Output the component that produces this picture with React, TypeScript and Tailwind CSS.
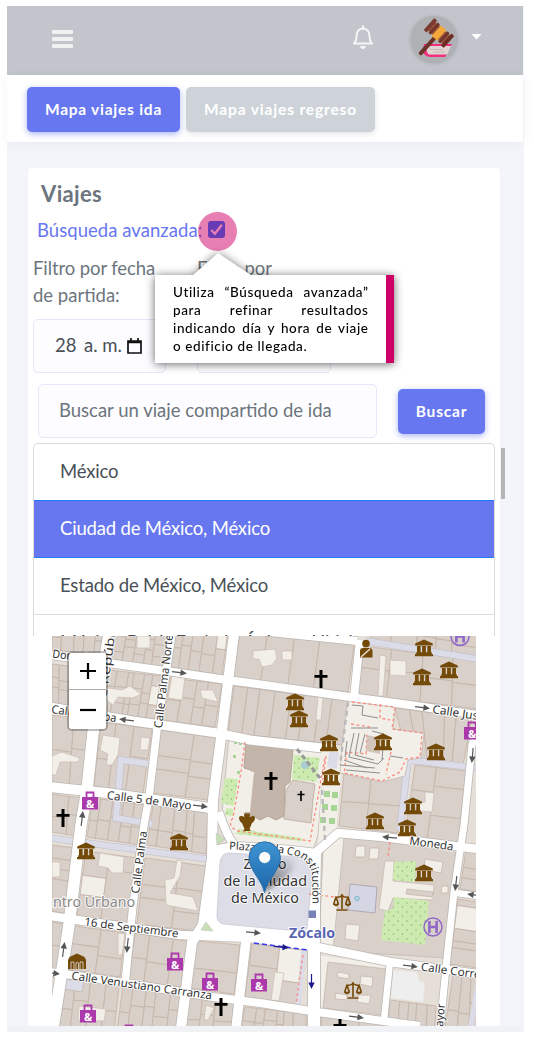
import React from "react";

type Pt = [number, number];
type Quad = [Pt, Pt, Pt, Pt];

const blocks: { q: Quad; c: number; r: number }[] = [
  { q: [[52, 600], [107, 605], [102, 655], [52, 650]], c: 5, r: 3 },
  { q: [[116, 625], [168, 630], [163, 668], [110, 661]], c: 5, r: 3 },
  { q: [[176, 625], [228, 630], [222, 675], [170, 667]], c: 5, r: 2 },
  { q: [[240, 632], [354, 645], [348, 692], [233, 678]], c: 4, r: 1 },
  { q: [[52, 664], [100, 670], [94, 710], [52, 703]], c: 5, r: 3 },
  { q: [[109, 670], [162, 676], [155, 719], [102, 712]], c: 6, r: 3 },
  { q: [[170, 678], [222, 684], [215, 727], [163, 720]], c: 4, r: 2 },
  { q: [[234, 686], [349, 701], [343, 745], [228, 733]], c: 8, r: 1 },
  { q: [[52, 715], [90, 719], [82, 787], [52, 782]], c: 2, r: 2 },
  { q: [[101, 722], [152, 729], [143, 793], [94, 786]], c: 3, r: 2 },
  { q: [[161, 730], [217, 738], [208, 800], [152, 793]], c: 2, r: 3 },
  { q: [[52, 794], [82, 798], [77, 836], [52, 832]], c: 2, r: 2 },
  { q: [[93, 798], [144, 805], [139, 845], [87, 837]], c: 5, r: 2 },
  { q: [[153, 805], [208, 813], [206, 854], [147, 845]], c: 5, r: 2 },
  { q: [[52, 845], [76, 848], [68, 914], [52, 911]], c: 1, r: 5 },
  { q: [[86, 851], [137, 858], [129, 923], [77, 916]], c: 2, r: 3 },
  { q: [[145, 858], [206, 866], [198, 931], [137, 924]], c: 2, r: 3 },
  { q: [[52, 922], [63, 924], [57, 970], [52, 969]], c: 1, r: 2 },
  { q: [[74, 926], [125, 933], [120, 977], [67, 969]], c: 2, r: 2 },
  { q: [[135, 933], [187, 941], [181, 987], [129, 980]], c: 3, r: 2 },
  { q: [[197, 941], [240, 945], [234, 994], [190, 988]], c: 1, r: 2 },
  { q: [[65, 978], [119, 986], [114, 1032], [59, 1030]], c: 4, r: 2 },
  { q: [[123, 986], [181, 995], [177, 1035], [117, 1030]], c: 5, r: 2 },
  { q: [[189, 996], [234, 1003], [231, 1035], [184, 1035]], c: 3, r: 2 },
  { q: [[252, 944], [302, 950], [297, 1005], [245, 997]], c: 2, r: 2 },
  { q: [[245, 1007], [306, 1014], [306, 1040], [240, 1035]], c: 6, r: 2 },
  { q: [[322, 1016], [430, 1027], [430, 1045], [320, 1040]], c: 6, r: 1 },
  { q: [[390, 1000], [436, 1006], [434, 1040], [388, 1025]], c: 5, r: 1 },
  { q: [[453, 975], [478, 978], [478, 1040], [444, 1035]], c: 3, r: 2 },
  { q: [[458, 899], [478, 902], [478, 968], [450, 964]], c: 1, r: 5 },
  { q: [[466, 850], [478, 852], [478, 892], [460, 889]], c: 1, r: 3 },
  { q: [[364, 646], [478, 661], [478, 709], [357, 694]], c: 4, r: 2 },
  { q: [[395, 708], [472, 718], [463, 765], [408, 758]], c: 5, r: 1 },
  { q: [[415, 765], [466, 771], [458, 842], [405, 836]], c: 2, r: 3 },
  { q: [[344, 772], [405, 772], [398, 833], [339, 826]], c: 2, r: 2 },
  { q: [[372, 620], [478, 636], [478, 656], [370, 640]], c: 5, r: 2 },
];

const mix = (q: Quad, u: number, v: number): Pt => {
  const f = (i: 0 | 1) =>
    q[0][i] * (1 - u) * (1 - v) + q[1][i] * u * (1 - v) + q[2][i] * u * v + q[3][i] * (1 - u) * v;
  return [Math.round(f(0) * 10) / 10, Math.round(f(1) * 10) / 10];
};

const noise = (n: number) => {
  const s = Math.sin(n * 127.1) * 43758.5453;
  return s - Math.floor(s);
};

function parcels() {
  const out: { d: string; open: boolean }[] = [];
  blocks.forEach(({ q, c, r }, b) => {
    for (let i = 0; i < c; i++) {
      const cut = (k: number) => (k === 0 ? 0 : k === r ? 1 : k / r + (noise(b * 31 + i * 7 + k) - 0.5) * 0.22);
      const edge = (k: number) => (k === 0 ? 0 : k === c ? 1 : k / c + (noise(b * 17 + k) - 0.5) * (0.5 / c));
      for (let j = 0; j < r; j++) {
        const p = [
          mix(q, edge(i), cut(j)),
          mix(q, edge(i + 1), cut(j)),
          mix(q, edge(i + 1), cut(j + 1)),
          mix(q, edge(i), cut(j + 1)),
        ];
        out.push({ d: "M" + p.map((x) => x.join(" ")).join("L") + "Z", open: noise(b * 53 + i * 11 + j * 3) > 0.97 });
      }
    }
  });
  return out;
}

const roads: [string, number][] = [
  ["M109 634L93 733L87 790L81 825L69 925L53 1028", 11.5],
  ["M172 634L157 730L149 797L144 825L133 905L125 984", 7.5],
  ["M234 634L222 730L213 800L212 858L203 925L192 942L181 1028", 10],
  ["M360 640L354 697", 8],
  ["M478 722L472 745L464 825L454 892L447 958L440 1028", 7],
  ["M246 940L236 1028", 9.5],
  ["M315 853L314 905L314 1028", 12],
  ["M390 962L384 1020", 6.5],
  ["M50 655L173 672L227 680L250 683L350 697L410 705L478 715", 8],
  ["M50 707L133 721L217 733L250 740L322 748", 9],
  ["M250 630L357 641", 8],
  ["M50 787L107 793L210 808", 10],
  ["M50 916L84 921L180 935L250 938L317 947L390 962L478 974", 8.5],
  ["M50 972L71 975L125 983L213 997L260 1003L317 1012L420 1026", 8],
  ["M215 850L235 846L290 850L315 853L338 833L383 837L478 849", 8.5],
  ["M457 893L478 896", 6.5],
  ["M219 812Q226 835 235 846", 8],
];

const museums: Pt[] = [
  [424, 648], [422, 677], [449, 670], [295, 702], [299, 719], [329, 743], [383, 742], [436, 752],
  [331, 777], [413, 806], [375, 821], [407, 828], [86, 851], [179, 842], [424, 873],
];
const bags: Pt[] = [[90, 801], [175, 962], [210, 982], [88, 1014], [129, 1034], [259, 983], [472, 731]];
const crosses: [number, number, number][] = [
  [63, 818, 1], [321, 679, 1], [271, 781, 1], [301, 796, 0.55], [221, 1007, 1], [340, 1028, 1],
];
const arrows: [number, number, number, string][] = [
  [179, 672.5, 7, "#555"], [127, 720, 187, "#555"], [200, 806, 7, "#555"], [422, 707.5, 7, "#555"],
  [82, 819, -83, "#555"], [63.5, 950, -82, "#555"], [127.5, 945, 96, "#555"], [253, 932.5, 5, "#555"],
  [390, 837.5, 185, "#555"], [456, 883, 97, "#555"], [472.5, 755, 95, "#555"], [410, 966, 7, "#555"],
  [356, 1017, 7, "#555"], [475, 895, 187, "#555"], [281, 947, 5, "#1a1a8c"], [311.5, 981, 90, "#1a1a8c"],
  [52, 973, 8, "#555"],
];

function Label({ x1, y1, x2, y2, size = 11.5, children }: { x1: number; y1: number; x2: number; y2: number; size?: number; children: string }) {
  const len = Math.hypot(x2 - x1, y2 - y1);
  const ang = (Math.atan2(y2 - y1, x2 - x1) * 180) / Math.PI;
  return (
    <text transform={`translate(${x1} ${y1}) rotate(${ang})`} fontSize={size} textLength={len} lengthAdjust="spacingAndGlyphs">
      {children}
    </text>
  );
}

function Hospital({ x, y }: { x: number; y: number }) {
  return (
    <g transform={`translate(${x} ${y})`} fill="none" stroke="#9068c8">
      <circle r="9" strokeWidth="1.5" />
      <path d="M-3.6-6V6M3.6-6V6M-3.6 0H3.6" strokeWidth="2.6" />
    </g>
  );
}

function CityMap() {
  return (
    <svg viewBox="52 636 424 390" className="block h-[390px] w-[424px]" fontFamily='"Noto Sans", sans-serif'>
      <defs>
        <linearGradient id="pin" x1="0" y1="0" x2="0" y2="1">
          <stop offset="0" stopColor="#3f94d3" />
          <stop offset="1" stopColor="#1c64a8" />
        </linearGradient>
        <linearGradient id="pinShade" x1="0" y1="1" x2="1" y2="0">
          <stop offset="0" stopColor="#000" stopOpacity=".55" />
          <stop offset="1" stopColor="#000" stopOpacity="0" />
        </linearGradient>
        <filter id="soft" x="-30%" y="-30%" width="160%" height="160%">
          <feGaussianBlur stdDeviation="2" />
        </filter>
        <pattern id="trees" width="9" height="9" patternUnits="userSpaceOnUse">
          <rect width="9" height="9" fill="#cdebb0" />
          <circle cx="2" cy="3" r=".7" fill="#7fae68" />
          <circle cx="6.5" cy="7" r=".7" fill="#7fae68" />
        </pattern>
        <path id="plaza" d="M229 849.500L275 852L296 856Q309 860 312 874L313 925" />
        <g id="museum" fill="#734a08">
          <path d="M-8.8-4.5L0-8.5L8.8-4.5V-2.5H-8.8ZM-7-2H-3.300V5H-7ZM-1.900-2H1.900V5H-1.900ZM3.300-2H7V5H3.300ZM-7.800 4.300H7.800V6H9V8.300H-9V6H-7.800Z" />
        </g>
        <g id="bag">
          <path d="M-3.5-3V-8.5H3.5V-3" fill="none" stroke="#ac39ac" strokeWidth="1.8" />
          <rect x="-8" y="-4" width="16" height="12.5" fill="#ac39ac" />
          <text x="0" y="6.5" fontSize="11" fontWeight="700" fill="#fff" textAnchor="middle">&amp;</text>
        </g>
        <g id="scales" fill="none" stroke="#734a08" strokeWidth="1.6">
          <path d="M0-8V7M-5.5 8H5.5M-7-5Q-3-4 0-6.5Q3-4 7-5M-6-5L-8.3 2M-6-5L-3.7 2M6-5L3.7 2M6-5L8.3 2" />
          <path d="M-9 2H-3Q-6 6-9 2ZM3 2H9Q6 6 3 2Z" fill="#734a08" strokeWidth=".7" />
        </g>
      </defs>

      <rect x="52" y="636" width="424" height="390" fill="#e6dfd7" />
      <g stroke="#c6b6aa" strokeWidth=".9">
        {parcels().map((p, i) => (
          <path key={i} d={p.d} fill={p.open ? "#f2efe9" : "#d9d0c9"} />
        ))}
      </g>

      <g fill="#f2efe9" stroke="#cbbcb0" strokeWidth=".7">
        <path d="M253 651L275 649L277 658L272 665L262 667L259 659H253ZM282 651H292V660H282ZM390 660L406 661V676L390 675ZM380 655L386 656L383 696H378Z" />
        <path d="M137 636H150V648H137ZM108 688L122 690L130 686L141 694L133 698L118 697L113 705L106 700ZM172 676L185 677L182 700L168 698ZM200 690H213L218 702L202 698ZM318 697L323 697L321 720L316 720Z" />
        <path d="M103 735L120 738L118 755L112 765H106L108 754L100 750ZM141 737L150 738L148 750H140ZM52 756L62 752L80 758L78 762L60 762L56 775H52ZM52 862H60V877H52ZM100 853L124 857L123 873H112L108 868L98 866ZM177 860L182 861L180 876L170 893L193 897L198 911L166 905L165 880L174 878Z" />
        <path d="M79 1006L106 1009L104 1021L78 1020ZM206 1005L214 1008L208 1020H204ZM118 933L125 934L122 955H118ZM275 972L284 973L279 1001L271 1000ZM425 792L434 793L432 812L420 811L418 804L425 802Z" />
      </g>
      <g fill="none" stroke="#bdbcc9" strokeWidth="7">
        <path d="M150 764L121 760L116 818L152 824M50 838L207 859M366 641L478 659M478 768L408 760L400 830" />
      </g>
      <g fill="none" stroke="#dcdce9" strokeWidth="6">
        <path d="M150 764L121 760L116 818L152 824M50 838L207 859M366 641L478 659M478 768L408 760L400 830" />
        <path d="M478 985L470 1030M304 948L298 1006" strokeWidth="5" />
      </g>
      <path d="M65 979L84 982L82 992L64 989Z" fill="#dcdce9" stroke="#c2b1a4" strokeWidth=".7" />

      <g stroke="#bbb5ae" strokeWidth=".7">
        <path d="M229 736L325 748L318 835L312 853L236 845L222 814Z" fill="#f2efe9" />
        <path d="M324 748L343 750L336 833L318 845Z" fill="#f2efe9" stroke="none" />
        <path d="M348 700L396 706L393 729L424 733L421 758L408 760L405 776L382 782L340 773L342 745Z" fill="#f2efe9" />
        <path d="M340 836L460 850L447 958L320 950L323 850Z" fill="#d9d0c9" />
        <path d="M323 850L341 836L344 838L333 950L319 949Z" fill="#f2efe9" />
        <path d="M317 955L389 965L384 1020L315 1012Z" fill="#f2efe9" stroke="none" />
        <path d="M328 962L387 969L381 1015L323 1008Z" fill="#d9d0c9" stroke="#c2b1a4" />
      </g>
      <path d="M329 752L339 752L337 769L327 767Z" fill="#dcdce9" />
      <path d="M393 970L417 972L419 981L425 983L423 1002L391 998Z" fill="#eeeeee" />

      <path d="M246 742L262 744L265 746L269 743L293 750L290 782L285 786L284 816L276 820L268 816L260 820L252 815L244 818L248 803L251 770L244 768Z" fill="#c4b5aa" stroke="#a8988c" strokeWidth=".8" />
      <path d="M250 771L254 772L250 812L244 812Z" fill="#f2efe9" />
      <path d="M293 780L315 784L313 800L311 823L284 819L286 790Z" fill="#d9d0c9" stroke="#baa99c" strokeWidth=".8" />
      <path d="M294 755L320 758L316 782L292 779ZM225 778L238 779L234 806L221 803ZM226 808L233 809V816L225 815ZM238 829L302 838L302 841L236 834Z" fill="url(#trees)" />
      <circle cx="305" cy="765" r="4" fill="#a9cdd3" />
      <g fill="#9bcf87" opacity=".85">
        <path d="M324 791h6v6h-6zM332 792h6v6h-6zM322 804h6v6h-6zM331 805h6v6h-6zM320 817h6v6h-6zM329 818h6v6h-6zM234 741h3v3h-3zM239 742h3v3h-3zM233 755h3v3h-3zM237 771h3v3h-3z" />
      </g>

      <path d="M385 861H394L393 881L434 885L433 900L412 899L393 898L388 911L379 909Z" fill="#f2efe9" stroke="#c6b6a9" strokeWidth=".7" />
      <path d="M394 862L416 861L415 882L393 880ZM394 897L429 901L425 945L381 940L385 911L393 909Z" fill="url(#trees)" />
      <path d="M350 884L377 887L375 913L348 910Z" fill="#d5d6e4" stroke="#aaa3af" strokeWidth=".9" />
      <circle cx="357" cy="898.500" r="2.300" fill="#add8e6" stroke="#7ba6bb" strokeWidth=".7" />
      <path d="M356 846H365V857H355ZM370 848H379L378 859H369ZM425 859L443 862L441 873L424 870ZM442 886H448V893H441ZM346 924L360 925L358 941L345 939ZM338 972L349 974V979L337 977ZM361 976L373 977L372 987L360 984ZM336 993L347 995V1000L335 999ZM358 995L371 995L369 1004L357 1002Z" fill="#f2efe9" stroke="#c6b6a9" strokeWidth=".8" />
      <path d="M407 889L433 892L432 897L406 894Z" fill="#d9d0c9" stroke="#c2b1a4" strokeWidth=".7" />

      <g fill="none" strokeLinejoin="round">
        {roads.map(([d, w], i) => (
          <path key={i} d={d} stroke="#bcb8b3" strokeWidth={w + 1.6} />
        ))}
        {roads.map(([d, w], i) => (
          <path key={i} d={d} stroke="#fff" strokeWidth={w} />
        ))}
      </g>
      <path d="M213 850L226 844L300 852L318 860L316 948L200 936Z" fill="#fff" />
      <path d="M228 853L303 857Q313 860 313 868L307 928Q305 932 298 931L223 924Q216 922 217 914L220 862Q222 853 228 853Z" fill="#dddde8" stroke="#c5c5cf" strokeWidth=".7" />
      <path d="M216 833L225 839L217 845ZM206 922L213 931L201 930Z" fill="#c8dfb5" stroke="#bbb" strokeWidth=".5" />

      <g fill="none" stroke="#fa8c80" strokeWidth="1.300" strokeDasharray="3 2.500">
        <path d="M245 742L241 772L233 818Q226 826 238 831L310 841L325 757M326 756L323 780M352 702L395 707L392 729L422 733L420 757L406 759L400 772L382 781L344 773L347 752L366 754L367 732M351 724L370 727M380 704L380 718L390 720M391 752L386 774M309 894L344 898M303 955L296 1004M390 842L388 856" />
      </g>
      <g fill="none" stroke="#8d8d8d">
        <path d="M348 702L340 765M322 790L325 840" strokeWidth="2.500" strokeDasharray="5 4" stroke="#bbb" />
        <path d="M297 749L320 778" strokeWidth="3" strokeDasharray="5 3" stroke="#999" />
        <path d="M352 705L363 706L362 715L378 718M351 728L378 728M354 733L349 757L378 764L384 758M359 733L355 755L374 760M372 731L384 734L382 760M340 765L375 768M344 760L367 768M390 756L403 758M347 741L345 757M365 734L360 753M346 770L380 773" strokeWidth="1" />
      </g>
      <path d="M367 735L381 738L380 754L366 751Z" fill="#cbbab0" opacity=".8" />
      <path d="M254 943L308 950" stroke="#3a3af0" strokeWidth="1.500" strokeDasharray="5 3" />

      {arrows.map(([x, y, a, c], i) => (
        <path key={i} transform={`translate(${x} ${y}) rotate(${a})`} d="M-7-.6H1.500V-3.200L8 0L1.500 3.200V.6H-7Z" fill={c} />
      ))}

      {museums.map(([x, y], i) => <use key={i} href="#museum" x={x} y={y} />)}
      {bags.map(([x, y], i) => <use key={i} href="#bag" x={x} y={y} />)}
      {crosses.map(([x, y, s], i) => (
        <path key={i} transform={`translate(${x} ${y}) scale(${s})`} d="M-1.500-9H1.500V-4H6.500V-1.300H1.500V9H-1.500V-1.300H-6.500V-4H-1.500Z" fill="#000" />
      ))}
      <use href="#scales" x="342" y="902" />
      <use href="#scales" x="353" y="990" />
      <path d="M68 960L69.500 957L77 953.500L84.500 957L86 960V969H68Z" fill="#734a08" />
      <path d="M71 969V962H74V969M80 969V962H83V969M76 969V963Q77 961.500 78.500 963V969" fill="none" stroke="#d9d0c9" strokeWidth=".9" />
      <path d="M244 813.500H250L249.500 817Q254 815 255 817.500Q255 821 252 823L249.500 829L251 831H243L244.500 829L242 823Q239 821 239 817.500Q240 815 244.500 817Z" fill="#734a08" />
      <g fill="#734a08">
        <circle cx="366" cy="643.500" r="3.800" />
        <path d="M360 651Q360 648 363 648H369Q372.500 648 372.500 651V657.500H360Z" />
        <path d="M361 657L370 649" stroke="#e8dfd4" strokeWidth="1.500" />
      </g>
      <Hospital x={433} y={927} />
      <Hospital x={460} y={636.5} />

      <g fill="#333" stroke="#fff" strokeOpacity=".85" strokeWidth="2" strokeLinejoin="round" paintOrder="stroke">
        <Label x1={52} y1={657.5} x2={97} y2={663}>Donceles</Label>
        <Label x1={51} y1={713} x2={116} y2={722}>Calle Tacuba</Label>
        <Label x1={103} y1={724} x2={115.5} y2={630}>Calle Repúbli</Label>
        <Label x1={162} y1={728.5} x2={173} y2={635}>Calle Palma Norte</Label>
        <Label x1={432} y1={713} x2={489} y2={721.5}>Calle Justo</Label>
        <Label x1={106.5} y1={799} x2={191} y2={809.5}>Calle 5 de Mayo</Label>
        <Label x1={139} y1={894} x2={147} y2={831.5}>Calle Palma</Label>
        <Label x1={84} y1={925.5} x2={178} y2={937.5}>16 de Septiembre</Label>
        <Label x1={71} y1={979.5} x2={211.5} y2={999.5}>Calle Venustiano Carranza</Label>
        <Label x1={409} y1={844.5} x2={453} y2={850.5}>Moneda</Label>
        <Label x1={420.5} y1={970.5} x2={487} y2={979.5}>Calle Correo</Label>
        <Label x1={442} y1={1037} x2={445} y2={1004}>Mayor</Label>
        <text fontSize="11"><textPath href="#plaza">Plaza de la Constitución</textPath></text>
        <g fontSize="14">
          <text x="243.500" y="868.500" textLength="43" lengthAdjust="spacingAndGlyphs">Zócalo</text>
          <text x="223.500" y="885.500" textLength="83.500" lengthAdjust="spacingAndGlyphs">de la Ciudad</text>
          <text x="231" y="902.500" textLength="68" lengthAdjust="spacingAndGlyphs">de México</text>
        </g>
        <text x="36" y="907" fontSize="14" fill="#8a8a8a" textLength="99" lengthAdjust="spacingAndGlyphs">Centro Urbano</text>
        <text x="289" y="938" fontSize="14" fontWeight="700" fill="#5a64b4" textLength="46" lengthAdjust="spacingAndGlyphs">Zócalo</text>
      </g>
      <rect x="308.500" y="910.500" width="7.500" height="7.500" fill="#7a83b8" />

      <path d="M264 892L270 872Q280 856 292 858Q300 864 288 876Z" fill="url(#pinShade)" filter="url(#soft)" />
      <path d="M264.500 892.500C262 880 249 870 249 857.500A15.700 15.700 0 0 1 280.400 857.500C280.400 870 267 880 264.500 892.500Z" fill="url(#pin)" stroke="#2a6fa8" strokeWidth="1" />
      <circle cx="264.700" cy="857.500" r="6" fill="#fff" stroke="#2f7cb8" strokeWidth=".8" />
    </svg>
  );
}

function Gavel() {
  return (
    <svg viewBox="0 0 46 46" className="size-[46px]">
      <path d="M13 28H41L40 30H17Q15 35 18 38H36L34 41H19Q12 40 12 34Z" fill="#f0307f" />
      <path d="M17 30H40L36 38.500H18Q14 36 17 30Z" fill="#e0d5d2" />
      <path d="M19 33.500H32M22 36H34" stroke="#c7b9b7" strokeWidth="1" />
      <g transform="rotate(42 28 17)">
        <rect x="26" y="20" width="4" height="26" rx="1.500" fill="#6b3329" />
        <rect x="17" y="11.500" width="22" height="11" fill="#9a5540" />
        <rect x="14.500" y="9" width="4" height="16" rx="1" fill="#7b3b2e" />
        <rect x="20" y="10" width="3" height="14" fill="#71352a" />
        <rect x="33" y="10" width="3" height="14" fill="#71352a" />
        <rect x="37.500" y="9" width="4" height="16" rx="1" fill="#6b2f25" />
        <rect x="24.500" y="10" width="7" height="14" fill="#f4a83a" />
      </g>
    </svg>
  );
}

const fieldBox = "rounded-[5px] border border-[#e4e6fc] bg-[#fdfdff]";

function DateField() {
  return (
    <div className={`${fieldBox} flex h-[54px] w-[133px] items-center pl-[21px] text-[18.5px] text-[#495057]`}>
      <span className="w-[29px]">28</span>
      <span className="w-[43px] whitespace-nowrap">a. m.</span>
      <svg viewBox="0 0 15 16" className="h-4 w-[15px]">
        <path d="M1 3H14V15H1ZM1 4.500H14M4 0V3M11 0V3" fill="none" stroke="#111" strokeWidth="1.700" />
      </svg>
    </div>
  );
}

function Callout() {
  return (
    <div className="absolute left-[127px] top-[85px] w-[239px] drop-shadow-[0_1px_5px_rgba(0,0,0,0.6)]">
      <svg viewBox="0 0 58 22" className="ml-[38px] block h-[22px] w-[58px]">
        <path d="M25 0L58 22H0Z" fill="#fff" />
      </svg>
      <div className="h-[88px] border-r-[8px] border-[#cc0066] bg-white pl-[18px] pr-[18px] pt-[8px] text-[13.5px] font-medium leading-[18px] tracking-[0.6px] text-black">
        <p className="-mr-[0.6px] whitespace-nowrap [text-align-last:justify]">Utiliza “Búsqueda avanzada”</p>
        <p className="-mr-[0.6px] whitespace-nowrap [text-align-last:justify]">para refinar resultados</p>
        <p className="-mr-[0.6px] whitespace-nowrap [text-align-last:justify]">indicando día y hora de viaje</p>
        <p className="whitespace-nowrap">o edificio de llegada.</p>
      </div>
    </div>
  );
}

const row = "flex h-[57px] items-center border-b border-[#dcdcdc] pl-[26px] whitespace-nowrap";

export default function App() {
  return (
    <div className="h-[1043px] w-[534px] overflow-hidden bg-white pl-[7px] pt-[6px] font-['Lato',sans-serif] text-[18.5px] text-[#6c757d]">
      <div className="h-[1026px] w-[517px] bg-[#f4f5fa]">
        <header className="flex h-[69px] w-[516px] items-start bg-[#c3c5cc] pl-[45px]">
          <div className="mt-[24px] flex w-[21px] flex-col gap-[3px]">
            <i className="h-[4px] rounded-[1px] bg-[#f1f1f1]" />
            <i className="h-[4px] rounded-[1px] bg-[#f1f1f1]" />
            <i className="h-[4px] rounded-[1px] bg-[#f1f1f1]" />
          </div>
          <svg viewBox="0 0 22 25" className="ml-[279px] mt-[19px] h-[25px] w-[22px]">
            <path d="M11 1V3M2 18.500Q4.500 16 4.500 10.500Q5 4 11 3.500Q17 4 17.500 10.500Q17.500 16 20 18.500Z" fill="none" stroke="#f5f5f5" strokeWidth="2" strokeLinejoin="round" strokeLinecap="round" />
            <path d="M8 21H14Q13.500 24 11 24Q8.500 24 8 21Z" fill="#f5f5f5" />
          </svg>
          <div className="ml-[37px] mt-[10px] size-[46px] overflow-hidden rounded-full bg-[#afb1b4] shadow-[0_1px_4px_rgba(0,0,0,0.2)]">
            <Gavel />
          </div>
          <svg viewBox="0 0 10 6" className="ml-[14px] mt-[28px] h-[6px] w-[11px]">
            <path d="M0 0H10L5 5.500Z" fill="#fff" />
          </svg>
        </header>

        <nav className="flex h-[67px] w-[516px] items-start gap-[6px] bg-white pl-[20px] pt-[12px] text-[15.5px] font-bold tracking-[0.75px] text-white shadow-[0_2px_12px_rgba(0,0,0,0.05)]">
          <button className="h-[45px] w-[153px] whitespace-nowrap rounded-[5px] bg-[#6777ef] shadow-[0_2px_6px_#acb5f6]">Mapa viajes ida</button>
          <button className="h-[45px] w-[189px] whitespace-nowrap rounded-[5px] bg-[#cdd3d8] tracking-[0.85px] shadow-[0_2px_6px_#e1e5e8]">Mapa viajes regreso</button>
        </nav>

        <main className="relative ml-[21px] mt-[26px] h-[858px] w-[472px] rounded-t-[4px] bg-white">
          <h1 className="pl-[13px] pt-[12px] text-[22px] font-bold leading-[28px] tracking-[0.35px]">Viajes</h1>
          <div className="mt-[7px] flex h-[28px] items-center pl-[9px] pt-[4px]">
            <span className="w-[169px] whitespace-nowrap tracking-[0.05px] text-[#6777ef]">Búsqueda avanzada:</span>
            <span className="flex size-[17px] -translate-y-[2px] translate-x-[2px] items-center justify-center rounded-[3px] bg-[#0075ff]">
              <svg viewBox="0 0 14 14" className="size-[15px]"><path d="M2 7.500L5.500 11L12 2.500" fill="none" stroke="#fff" strokeWidth="2.200" /></svg>
            </span>
          </div>
          <div className="mt-[12px] flex h-[64px] gap-[31px] pl-[5px] leading-[27px]">
            <p className="w-[133px]"><span className="whitespace-nowrap tracking-[-0.1px]">Filtro por fecha</span><br />de partida:</p>
            <p className="w-[133px]">Filtro por<br />hora:</p>
          </div>
          <div className="flex gap-[31px] pl-[5px]">
            <DateField />
            <div className={`${fieldBox} h-[54px] w-[134px]`} />
          </div>
          <div className="mt-[11px] flex h-[53px] items-center gap-[21px] pl-[10px]">
            <div className={`${fieldBox} flex h-[54px] w-[339px] items-center whitespace-nowrap pl-[20px]`}>Buscar un viaje compartido de ida</div>
            <button className="h-[45px] w-[87px] translate-y-px rounded-[5px] bg-[#6777ef] text-[15.5px] font-bold tracking-[0.8px] text-white shadow-[0_2px_6px_#acb5f6]">Buscar</button>
          </div>
          <div className="relative ml-[5px] mt-[6px] h-[193px] w-[462px] overflow-hidden rounded-t-[5px] border border-b-0 border-[#dcdcdc] tracking-[-0.18px] text-[#495057]">
            <div className={row}>México</div>
            <div className="relative -ml-px -mt-px flex h-[58px] w-[462px] items-center whitespace-nowrap border border-[#1f7cf5] bg-[#6777ef] pl-[26px] text-white">Ciudad de México, México</div>
            <div className={row}>Estado de México, México</div>
            <div className={row}>México, Bahía Exelaris, Ánimas, Hidalgo</div>
          </div>
          <div className="relative ml-[24px] w-[424px]">
            <CityMap />
            <div className="absolute left-[15px] top-[15px] w-[41px] rounded-[5px] border-2 border-black/25 bg-clip-padding">
              <div className="flex h-[37px] items-center justify-center rounded-t-[3px] border-b border-[#aaa] bg-white">
                <svg viewBox="0 0 16 16" className="size-4"><path d="M8 0V16M0 8H16" stroke="#000" strokeWidth="2.200" /></svg>
              </div>
              <div className="flex h-[39px] items-center justify-center rounded-b-[3px] bg-white">
                <svg viewBox="0 0 16 16" className="size-4"><path d="M0 8H16" stroke="#000" strokeWidth="2.200" /></svg>
              </div>
            </div>
          </div>
          <i className="absolute left-[473px] top-[280px] h-[51px] w-[4px] bg-[#b5b5b5]" />
          <i className="absolute left-[170px] top-[44px] size-[39px] rounded-full bg-[#d0006b]/50" />
          <Callout />
        </main>
        <div className="h-[6px] bg-[#f1f2f5]" />
      </div>
    </div>
  );
}
